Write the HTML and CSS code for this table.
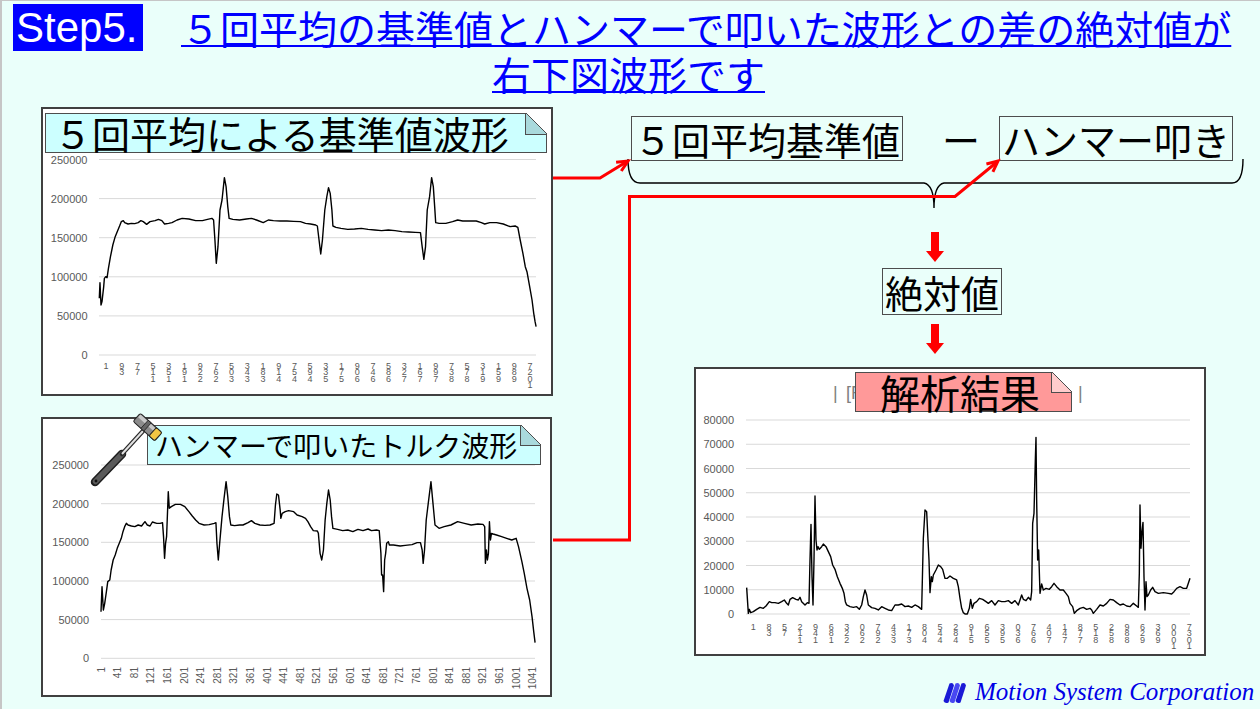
FILE: index.html
```html
<!DOCTYPE html>
<html lang="ja">
<head>
<meta charset="utf-8">
<title>Step5</title>
<link rel="stylesheet" href="styles.css">
</head>
<body>
<div class="slide">
  <header class="header">
    <div class="badge">Step5.</div>
    <h1 class="title">
      <span class="title-line">５回平均の基準値とハンマーで叩いた波形との差の絶対値が</span>
      <span class="title-line title-line2">右下図波形です</span>
    </h1>
  </header>

  <main class="main">
    <section class="left-col">
      <div class="chart chart1">
        <svg class="plot" width="508" height="285" viewBox="43 109 508 285">
          <g class="grid">
            <line x1="99" x2="536" y1="159.5" y2="159.5"/>
            <line x1="99" x2="536" y1="198.6" y2="198.6"/>
            <line x1="99" x2="536" y1="237.7" y2="237.7"/>
            <line x1="99" x2="536" y1="276.8" y2="276.8"/>
            <line x1="99" x2="536" y1="315.9" y2="315.9"/>
            <line x1="99" x2="536" y1="355" y2="355"/>
          </g>
          <g class="ylabels">
            <text x="87.5" y="163.5">250000</text>
            <text x="87.5" y="202.6">200000</text>
            <text x="87.5" y="241.7">150000</text>
            <text x="87.5" y="280.8">100000</text>
            <text x="87.5" y="319.9">50000</text>
            <text x="87.5" y="359">0</text>
          </g>
          <g class="xlabels">
            <text x="106" y="368.5">1</text>
            <text x="121.7 121.7" y="368.5 375">93</text>
            <text x="137.4 137.4" y="368.5 375">77</text>
            <text x="153.1 153.1 153.1" y="368.5 375 381.5">511</text>
            <text x="168.8 168.8 168.8" y="368.5 375 381.5">351</text>
            <text x="184.5 184.5 184.5" y="368.5 375 381.5">191</text>
            <text x="200.2 200.2 200.2" y="368.5 375 381.5">922</text>
            <text x="215.9 215.9 215.9" y="368.5 375 381.5">762</text>
            <text x="231.6 231.6 231.6" y="368.5 375 381.5">503</text>
            <text x="247.3 247.3 247.3" y="368.5 375 381.5">343</text>
            <text x="263 263 263" y="368.5 375 381.5">183</text>
            <text x="278.7 278.7 278.7" y="368.5 375 381.5">914</text>
            <text x="294.4 294.4 294.4" y="368.5 375 381.5">754</text>
            <text x="310.1 310.1 310.1" y="368.5 375 381.5">594</text>
            <text x="325.8 325.8 325.8" y="368.5 375 381.5">335</text>
            <text x="341.5 341.5 341.5" y="368.5 375 381.5">175</text>
            <text x="357.2 357.2 357.2" y="368.5 375 381.5">906</text>
            <text x="372.9 372.9 372.9" y="368.5 375 381.5">746</text>
            <text x="388.6 388.6 388.6" y="368.5 375 381.5">586</text>
            <text x="404.3 404.3 404.3" y="368.5 375 381.5">327</text>
            <text x="420 420 420" y="368.5 375 381.5">167</text>
            <text x="435.7 435.7 435.7" y="368.5 375 381.5">997</text>
            <text x="451.4 451.4 451.4" y="368.5 375 381.5">738</text>
            <text x="467.1 467.1 467.1" y="368.5 375 381.5">578</text>
            <text x="482.8 482.8 482.8" y="368.5 375 381.5">319</text>
            <text x="498.5 498.5 498.5" y="368.5 375 381.5">159</text>
            <text x="514.2 514.2 514.2" y="368.5 375 381.5">989</text>
            <text x="529.9 529.9 529.9 529.9" y="368.5 375 381.5 388">7201</text>
          </g>
          <g transform="translate(30 100) scale(0.33807 0.33333)">
            <polyline class="wave" points="205,595 207,548 210,615 213,605 218,560 220,535 224,530 228,533 232,505 238,470 245,435 252,410 258,395 265,378 270,365 276,362 280,368 290,372 300,370 310,371 320,368 328,362 335,365 345,373 355,365 370,362 380,358 390,362 398,372 410,370 420,368 435,360 450,355 470,357 490,362 510,362 525,358 538,355 543,360 547,420 551,490 556,440 562,330 568,300 575,233 580,260 585,320 589,355 600,358 620,360 640,357 655,355 670,360 690,368 705,360 720,362 740,363 760,363 780,364 800,365 815,370 830,372 845,375 850,378 855,420 860,462 865,420 872,330 878,290 883,263 888,280 893,330 896,378 905,382 920,385 940,388 960,387 980,385 1000,388 1020,390 1040,392 1060,390 1080,392 1100,395 1120,396 1140,397 1155,398 1160,440 1165,478 1170,440 1175,330 1182,290 1188,233 1193,260 1197,320 1200,368 1210,370 1230,370 1250,365 1265,360 1280,363 1300,363 1320,363 1335,368 1345,372 1360,368 1380,368 1400,372 1420,380 1435,378 1443,382 1450,420 1458,460 1465,500 1470,515 1478,560 1485,600 1490,640 1494,665 1497,680"/>
          </g>
        </svg>
        <div class="note note-cyan note1">５回平均による基準値波形</div>
      </div>

      <div class="chart chart2">
        <svg class="plot" width="507" height="276" viewBox="43 419 507 276">
          <g class="grid">
            <line x1="101" x2="535" y1="465" y2="465"/>
            <line x1="101" x2="535" y1="503.7" y2="503.7"/>
            <line x1="101" x2="535" y1="542.3" y2="542.3"/>
            <line x1="101" x2="535" y1="581" y2="581"/>
            <line x1="101" x2="535" y1="619.6" y2="619.6"/>
            <line x1="101" x2="535" y1="658.3" y2="658.3"/>
          </g>
          <g class="ylabels">
            <text x="89" y="469">250000</text>
            <text x="89" y="507.7">200000</text>
            <text x="89" y="546.3">150000</text>
            <text x="89" y="585">100000</text>
            <text x="89" y="623.6">50000</text>
            <text x="89" y="662.3">0</text>
          </g>
          <g class="rotlabels">
            <text transform="translate(101 667) rotate(-90)" dy="0.35em">1</text>
            <text transform="translate(117.6 667) rotate(-90)" dy="0.35em">41</text>
            <text transform="translate(134.2 667) rotate(-90)" dy="0.35em">81</text>
            <text transform="translate(150.8 667) rotate(-90)" dy="0.35em">121</text>
            <text transform="translate(167.4 667) rotate(-90)" dy="0.35em">161</text>
            <text transform="translate(184 667) rotate(-90)" dy="0.35em">201</text>
            <text transform="translate(200.6 667) rotate(-90)" dy="0.35em">241</text>
            <text transform="translate(217.2 667) rotate(-90)" dy="0.35em">281</text>
            <text transform="translate(233.8 667) rotate(-90)" dy="0.35em">321</text>
            <text transform="translate(250.4 667) rotate(-90)" dy="0.35em">361</text>
            <text transform="translate(267 667) rotate(-90)" dy="0.35em">401</text>
            <text transform="translate(283.6 667) rotate(-90)" dy="0.35em">441</text>
            <text transform="translate(300.2 667) rotate(-90)" dy="0.35em">481</text>
            <text transform="translate(316.8 667) rotate(-90)" dy="0.35em">521</text>
            <text transform="translate(333.4 667) rotate(-90)" dy="0.35em">561</text>
            <text transform="translate(350 667) rotate(-90)" dy="0.35em">601</text>
            <text transform="translate(366.6 667) rotate(-90)" dy="0.35em">641</text>
            <text transform="translate(383.2 667) rotate(-90)" dy="0.35em">681</text>
            <text transform="translate(399.8 667) rotate(-90)" dy="0.35em">721</text>
            <text transform="translate(416.4 667) rotate(-90)" dy="0.35em">761</text>
            <text transform="translate(433 667) rotate(-90)" dy="0.35em">801</text>
            <text transform="translate(449.6 667) rotate(-90)" dy="0.35em">841</text>
            <text transform="translate(466.2 667) rotate(-90)" dy="0.35em">881</text>
            <text transform="translate(482.8 667) rotate(-90)" dy="0.35em">921</text>
            <text transform="translate(499.4 667) rotate(-90)" dy="0.35em">961</text>
            <text transform="translate(516 667) rotate(-90)" dy="0.35em">1001</text>
            <text transform="translate(532.6 667) rotate(-90)" dy="0.35em">1041</text>
          </g>
          <g transform="translate(30 410) scale(0.33807 0.33333)">
            <polyline class="wave" points="210,605 213,530 217,600 221,580 226,545 230,515 236,510 240,480 246,450 252,435 258,415 264,400 270,385 275,365 280,350 285,340 290,345 300,348 310,350 320,345 330,348 340,335 347,345 355,348 362,336 375,340 385,340 392,338 395,380 398,445 401,400 404,380 407,300 409,245 412,295 418,290 430,283 445,283 458,290 470,305 480,318 490,330 500,340 515,345 530,344 545,340 550,338 553,400 557,450 561,400 568,320 574,265 580,215 585,260 590,320 594,345 605,347 620,345 630,345 645,338 655,332 665,340 680,345 695,346 710,345 722,340 726,285 730,252 735,255 740,300 742,325 746,310 755,305 765,302 780,305 790,315 805,320 815,325 822,335 830,350 838,362 850,363 853,370 858,430 863,450 868,420 873,330 878,280 883,240 888,270 892,320 896,355 910,358 925,362 940,360 955,365 970,358 985,362 1000,357 1010,362 1025,360 1033,362 1038,430 1040,495 1043,495 1046,545 1049,450 1052,430 1055,400 1060,395 1063,405 1075,405 1095,408 1110,406 1130,404 1145,398 1155,398 1160,420 1163,460 1167,420 1172,330 1178,280 1186,215 1192,280 1198,345 1210,355 1225,350 1245,345 1265,335 1285,340 1305,345 1325,342 1340,343 1345,350 1347,460 1350,420 1353,450 1356,430 1359,335 1362,390 1365,370 1370,372 1380,375 1395,380 1410,385 1425,390 1438,385 1445,410 1455,455 1462,490 1470,535 1478,570 1485,620 1490,665 1494,698"/>
          </g>
        </svg>
        <div class="note note-cyan note2">ハンマーで叩いたトルク波形</div>
        <svg class="hammer" width="80" height="80" viewBox="0 0 80 80">
          <line x1="10" y1="72" x2="37" y2="44" stroke="#1e1e1e" stroke-width="8.5" stroke-linecap="round"/>
          <line x1="10.5" y1="71.5" x2="37" y2="44" stroke="#5a5a5a" stroke-width="5.5" stroke-linecap="round"/>
          <circle cx="11" cy="71" r="1.4" fill="#111"/>
          <line x1="37" y1="44" x2="58" y2="21" stroke="#2a2a2a" stroke-width="4.5" stroke-linecap="round"/>
          <line x1="37" y1="44" x2="58" y2="21" stroke="#e2e2e2" stroke-width="2"/>
          <g transform="translate(62.5 17) rotate(42)">
            <rect x="-14.5" y="-5.5" width="29" height="11" rx="2" fill="#8c8c8c" stroke="#222" stroke-width="1"/>
            <rect x="-13.5" y="-4.5" width="20" height="3.5" fill="#c8c8c8"/>
            <rect x="-4" y="-5.5" width="4" height="11" fill="#666" stroke="#222" stroke-width="0.8"/>
            <rect x="7" y="-5.5" width="7.5" height="11" rx="1.5" fill="#f2c744" stroke="#222" stroke-width="1"/>
          </g>
        </svg>
      </div>
    </section>

    <section class="right-col">
      <div class="formula">
        <div class="term">５回平均基準値</div>
        <div class="minus">ー</div>
        <div class="term">ハンマー叩き</div>
      </div>
      <svg class="down-arrow a1" width="18" height="30" viewBox="0 0 18 30">
        <rect x="5" y="0" width="8" height="20" fill="#ff0000"/>
        <polygon points="0,19 18,19 9,30" fill="#ff0000"/>
      </svg>
      <div class="term abs">絶対値</div>
      <svg class="down-arrow a2" width="18" height="30" viewBox="0 0 18 30">
        <rect x="5" y="0" width="8" height="20" fill="#ff0000"/>
        <polygon points="0,19 18,19 9,30" fill="#ff0000"/>
      </svg>

      <div class="chart chart3">
        <svg class="plot" width="508" height="285" viewBox="696 369 508 285">
          <text class="ghost" x="833 846 851" y="399">|[R</text>
          <text class="ghost" x="1078" y="399">|</text>
          <g class="grid">
            <line x1="746" x2="1190" y1="420" y2="420"/>
            <line x1="746" x2="1190" y1="444.25" y2="444.25"/>
            <line x1="746" x2="1190" y1="468.5" y2="468.5"/>
            <line x1="746" x2="1190" y1="492.75" y2="492.75"/>
            <line x1="746" x2="1190" y1="517" y2="517"/>
            <line x1="746" x2="1190" y1="541.25" y2="541.25"/>
            <line x1="746" x2="1190" y1="565.5" y2="565.5"/>
            <line x1="746" x2="1190" y1="589.75" y2="589.75"/>
            <line x1="746" x2="1190" y1="614" y2="614"/>
          </g>
          <g class="ylabels">
            <text x="734" y="424">80000</text>
            <text x="734" y="448.25">70000</text>
            <text x="734" y="472.5">60000</text>
            <text x="734" y="496.75">50000</text>
            <text x="734" y="521">40000</text>
            <text x="734" y="545.25">30000</text>
            <text x="734" y="569.5">20000</text>
            <text x="734" y="593.75">10000</text>
            <text x="734" y="618">0</text>
          </g>
          <g class="xlabels">
            <text x="753.3" y="629.5">1</text>
            <text x="768.9 768.9" y="629.5 636">83</text>
            <text x="784.4 784.4" y="629.5 636">57</text>
            <text x="800 800 800" y="629.5 636 642.5">211</text>
            <text x="815.6 815.6 815.6" y="629.5 636 642.5">941</text>
            <text x="831.2 831.2 831.2" y="629.5 636 642.5">681</text>
            <text x="846.7 846.7 846.7" y="629.5 636 642.5">322</text>
            <text x="862.3 862.3 862.3" y="629.5 636 642.5">062</text>
            <text x="877.9 877.9 877.9" y="629.5 636 642.5">792</text>
            <text x="893.4 893.4 893.4" y="629.5 636 642.5">433</text>
            <text x="909 909 909" y="629.5 636 642.5">173</text>
            <text x="924.6 924.6 924.6" y="629.5 636 642.5">804</text>
            <text x="940.1 940.1 940.1" y="629.5 636 642.5">544</text>
            <text x="955.7 955.7 955.7" y="629.5 636 642.5">284</text>
            <text x="971.3 971.3 971.3" y="629.5 636 642.5">915</text>
            <text x="986.9 986.9 986.9" y="629.5 636 642.5">655</text>
            <text x="1002.4 1002.4 1002.4" y="629.5 636 642.5">395</text>
            <text x="1018 1018 1018" y="629.5 636 642.5">036</text>
            <text x="1033.6 1033.6 1033.6" y="629.5 636 642.5">766</text>
            <text x="1049.1 1049.1 1049.1" y="629.5 636 642.5">407</text>
            <text x="1064.7 1064.7 1064.7" y="629.5 636 642.5">147</text>
            <text x="1080.3 1080.3 1080.3" y="629.5 636 642.5">877</text>
            <text x="1095.8 1095.8 1095.8" y="629.5 636 642.5">518</text>
            <text x="1111.4 1111.4 1111.4" y="629.5 636 642.5">258</text>
            <text x="1127 1127 1127" y="629.5 636 642.5">988</text>
            <text x="1142.6 1142.6 1142.6" y="629.5 636 642.5">629</text>
            <text x="1158.1 1158.1 1158.1" y="629.5 636 642.5">369</text>
            <text x="1173.7 1173.7 1173.7 1173.7" y="629.5 636 642.5 649">0001</text>
            <text x="1189.3 1189.3 1189.3 1189.3" y="629.5 636 642.5 649">7301</text>
          </g>
          <g transform="translate(690 360) scale(0.33333)">
            <polyline class="wave" points="170,683 175,760 178,748 182,758 190,755 200,748 210,742 220,745 228,738 238,725 245,728 255,728 265,730 275,725 283,720 290,730 295,735 300,718 308,713 318,718 325,720 330,712 335,725 345,735 352,728 357,730 360,600 363,493 366,650 369,735 372,600 375,408 378,540 381,570 384,560 388,568 395,560 400,552 408,560 415,575 422,590 428,615 435,628 442,650 450,670 457,685 462,700 466,725 470,735 480,740 490,742 500,740 508,748 515,735 520,710 525,690 530,705 535,735 545,743 555,745 565,750 575,740 585,745 595,750 605,752 615,735 625,735 635,732 645,740 655,738 665,742 675,735 685,740 695,748 700,535 705,450 710,455 713,520 717,600 720,698 724,650 727,665 730,645 738,630 745,615 752,620 758,628 765,655 772,655 780,648 790,655 800,660 805,680 810,715 815,745 820,758 825,762 832,762 838,745 842,718 847,745 852,730 860,725 868,715 878,718 888,725 895,730 905,722 915,735 925,722 935,725 945,725 955,722 965,730 975,722 985,735 995,705 1000,718 1008,722 1015,712 1022,720 1025,695 1028,490 1032,460 1036,300 1038,232 1040,420 1043,600 1046,570 1050,700 1055,672 1060,690 1068,685 1078,688 1085,680 1092,670 1100,680 1110,690 1120,690 1128,700 1135,710 1140,730 1148,740 1153,760 1160,752 1170,745 1180,742 1190,748 1200,745 1205,750 1210,760 1220,748 1230,735 1240,738 1250,730 1260,718 1270,720 1280,728 1290,735 1300,732 1310,738 1320,740 1330,730 1340,738 1345,742 1348,640 1350,435 1353,565 1356,515 1359,487 1362,650 1365,750 1368,665 1371,710 1375,705 1382,690 1388,682 1395,695 1405,700 1420,698 1435,700 1445,702 1452,695 1460,685 1470,680 1480,685 1490,685 1495,670 1500,655"/>
          </g>
        </svg>
        <div class="note note-pink">解析結果</div>
      </div>

      <div class="logo">
        <svg class="logo-mark" width="24" height="22" viewBox="0 0 24 22">
          <path d="M0.5,19 Q2,22 5.5,20.5 L11,3.5 Q10,0 6.5,1.5 Z" fill="#1a1ad6"/>
          <path d="M6.5,19 Q8,22 11.5,20.5 L17,3.5 Q16,0 12.5,1.5 Z" fill="#4848f2"/>
          <path d="M12.5,19 Q14,22 17.5,20.5 L23,3.5 Q22,0 18.5,1.5 Z" fill="#1a1ad6"/>
        </svg>
        <span class="logo-text">Motion System Corporation</span>
      </div>
    </section>
  </main>

  <svg class="connectors" width="1260" height="709" viewBox="0 0 1260 709">
    <path class="brace" d="M628,159 C628,172 631,183 640,183 L924,183 Q934,185 934,208 Q934,185 944,183 L1232,183 C1240,183 1243,172 1243,159"/>
    <path class="red-line" d="M553,178 L600,178 L627,161.5"/>
    <path class="red-line" d="M621.3,171 L628,161 L616.1,162.3"/>
    <path class="red-line" d="M553,540 L629.5,540 L629.5,196.5 L955,196.5 L997,162"/>
    <path class="red-line" d="M992.9,171.8 L998,161 L986.4,164"/>
  </svg>
</div>
</body>
</html>
```

FILE: styles.css
```css
html, body {
  margin: 0;
  padding: 0;
}

body {
  background: #eafffa;
  font-family: "Noto Sans CJK JP", sans-serif;
}

.slide {
  position: relative;
  width: 1260px;
  height: 709px;
  overflow: hidden;
  background: #eafffa;
  box-shadow: inset 2px 1px 0 #c6c6c6;
}

/* ---------- header ---------- */
.header {
  display: flex;
  align-items: flex-start;
  height: 107px;
  padding-left: 13px;
  box-sizing: border-box;
}

.badge {
  margin-top: 4px;
  width: 130px;
  height: 47px;
  padding-left: 3px;
  box-sizing: border-box;
  background: #0000ff;
  color: #ffffff;
  font-family: "Liberation Sans", Arial, sans-serif;
  font-size: 42px;
  line-height: 47px;
  white-space: nowrap;
}

.title {
  margin: 4px 0 0 38px;
  font-family: "Noto Sans CJK JP", sans-serif;
  font-weight: normal;
  font-size: 39px;
  line-height: 46px;
  color: #0000ff;
}

.title-line {
  display: block;
  width: max-content;
  text-decoration: underline;
  text-decoration-thickness: 2px;
  white-space: nowrap;
}

.title-line2 {
  margin-left: 311px;
}

/* ---------- layout ---------- */
.main {
  display: flex;
  align-items: flex-start;
}

.left-col {
  flex: none;
  display: flex;
  flex-direction: column;
  gap: 21px;
  padding-left: 41px;
}

.right-col {
  flex: none;
  display: flex;
  flex-direction: column;
  align-items: flex-start;
  margin-left: 78px;
}

/* ---------- charts ---------- */
.chart {
  position: relative;
  box-sizing: border-box;
  background: #ffffff;
  border: 2px solid #404040;
}

.chart1 {
  width: 512px;
  height: 289px;
}

.chart2 {
  width: 511px;
  height: 280px;
}

.chart3 {
  width: 512px;
  height: 289px;
  margin-top: 13px;
  margin-left: 63px;
}

.plot {
  display: block;
}

.grid line {
  stroke: #d9d9d9;
  stroke-width: 1;
}

.ylabels text {
  font-family: "Liberation Sans", Arial, sans-serif;
  font-size: 11px;
  fill: #595959;
  text-anchor: end;
}

.xlabels text {
  font-family: "Liberation Sans", Arial, sans-serif;
  font-size: 9px;
  fill: #595959;
  text-anchor: middle;
}

.rotlabels text {
  font-family: "Liberation Sans", Arial, sans-serif;
  font-size: 10px;
  fill: #595959;
  text-anchor: end;
}

.ghost {
  font-family: "Liberation Sans", Arial, sans-serif;
  font-size: 18px;
  fill: #7f7f7f;
}

.wave {
  fill: none;
  stroke: #000000;
  stroke-width: 1.4;
  stroke-linejoin: round;
  vector-effect: non-scaling-stroke;
}

/* ---------- note labels ---------- */
.note {
  position: absolute;
  box-sizing: border-box;
  border: 1px solid #4d4d4d;
  font-family: "Noto Sans CJK JP", sans-serif;
  color: #000000;
  white-space: nowrap;
}

.note::after {
  content: "";
  position: absolute;
  top: -1px;
  right: -1px;
  width: var(--fold-size, 22px);
  height: var(--fold-size, 22px);
  box-sizing: border-box;
  border-left: 1px solid #4d4d4d;
  border-bottom: 1px solid #4d4d4d;
  background: linear-gradient(to bottom left,
    #ffffff 0,
    #ffffff calc(50% - 0.7px),
    #4d4d4d calc(50% - 0.7px),
    #4d4d4d calc(50% + 0.7px),
    var(--fold) calc(50% + 0.7px));
}

.note-cyan {
  background: #ccffff;
  --fold: #a9d9dc;
}

.note1 {
  left: 2px;
  top: 4px;
  width: 502px;
  height: 40px;
  padding-left: 8px;
  font-size: 38px;
  line-height: 38px;
}

.note2 {
  left: 104px;
  top: 6px;
  width: 394px;
  height: 40px;
  padding-left: 7px;
  font-size: 28px;
  line-height: 38px;
  --fold-size: 21px;
}

.note-pink {
  left: 159px;
  top: 3px;
  width: 217px;
  height: 40px;
  padding-left: 24px;
  background: #ff9999;
  font-size: 40px;
  line-height: 38px;
  --fold: #ffcccc;
  --fold-size: 21px;
}

.hammer {
  position: absolute;
  left: 42px;
  top: -9px;
  overflow: visible;
}

/* ---------- formula ---------- */
.formula {
  display: flex;
  align-items: center;
  margin-top: 9px;
}

.term {
  box-sizing: border-box;
  border: 1px solid #4d4d4d;
  padding: 0 2px;
  font-family: "Noto Sans CJK JP", sans-serif;
  font-size: 38px;
  line-height: 43px;
  color: #000000;
  white-space: nowrap;
}

.minus {
  margin: 0 19px 0 39px;
  font-size: 38px;
  line-height: 43px;
  color: #000000;
}

.abs {
  margin-top: 6px;
  margin-left: 251px;
  line-height: 45px;
}

.down-arrow {
  display: block;
  margin-left: 295px;
}

.a1 {
  margin-top: 71px;
}

.a2 {
  margin-top: 9px;
}

/* ---------- logo ---------- */
.logo {
  display: flex;
  align-items: flex-end;
  gap: 8px;
  margin-top: 24px;
  margin-left: 312px;
}

.logo-mark {
  display: block;
  flex: none;
}

.logo-text {
  font-family: "Liberation Serif", "Times New Roman", serif;
  font-style: italic;
  font-size: 25px;
  line-height: 24px;
  color: #0000e6;
  white-space: nowrap;
}

/* ---------- connectors ---------- */
.connectors {
  position: absolute;
  left: 0;
  top: 0;
  pointer-events: none;
}

.brace {
  fill: none;
  stroke: #000000;
  stroke-width: 1.4;
}

.red-line {
  fill: none;
  stroke: #ff0000;
  stroke-width: 3;
  stroke-linejoin: miter;
}
```
